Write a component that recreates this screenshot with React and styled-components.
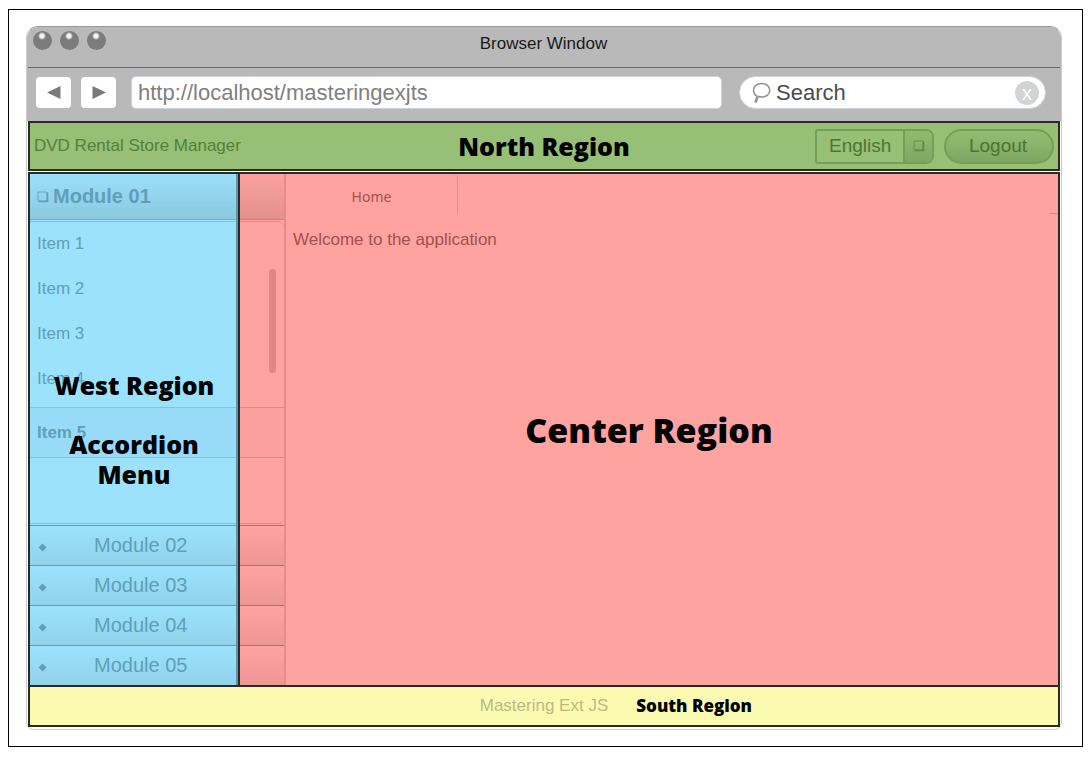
import React from "react";
import styled, { createGlobalStyle, css } from "styled-components";

const sans = '"Liberation Sans", Arial, sans-serif';
const heavy = '"Open Sans", "Noto Sans", sans-serif';
const line = "#2a2a26";

const GlobalStyle = createGlobalStyle`
  *, *::before, *::after { box-sizing: border-box; }
  body { margin: 0; background: #fff; font-family: ${sans}; }
  button, input, select { font-family: inherit; margin: 0; }
  ul, h1, h2, p { margin: 0; padding: 0; }
`;

const Frame = styled.div`
  margin: 9px 7px 11px 8px;
  padding: 16px 20px 16px 17px;
  border: 1px solid #000;
`;

const BrowserWindow = styled.div`
  border: 1px solid #ccc;
  border-top-color: #999;
  border-radius: 12px 12px 8px 8px;
  padding-bottom: 2px;
`;

const Chrome = styled.header`
  background: #b9b9b9;
  border-radius: 11px 11px 0 0;
`;

const TitleBar = styled.div`
  display: grid;
  grid-template-columns: 1fr auto 1fr;
  height: 41px;
  margin: 0 1px;
  padding: 4px 6px 0 5px;
  border-bottom: 1px solid #6a6a6a;
`;

const Lights = styled.div`
  display: flex;
  gap: 8px;
`;

const Light = styled.span`
  width: 19px;
  height: 19px;
  border-radius: 50%;
  background: radial-gradient(circle at 9px 5px, #fff 0, #eee 2px, #7c7c7c 4px);
`;

const WindowTitle = styled.h1`
  font-size: 17px;
  font-weight: 400;
  line-height: 26px;
  color: #1a1a1a;
`;

const Toolbar = styled.div`
  display: flex;
  align-items: center;
  height: 53px;
  padding: 0 15px 4px 9px;
`;

const NavButton = styled.button`
  display: grid;
  place-items: center;
  width: 35px;
  height: 31px;
  margin-right: 10px;
  padding: 0;
  border: 0;
  border-radius: 4px;
  background: #fff;
`;

const AddressInput = styled.input`
  flex: 1;
  min-width: 0;
  height: 33px;
  margin: 0 17px 0 5px;
  padding: 0 6px;
  border: 1px solid #cdd1da;
  border-radius: 5px;
  background: #fff;
  color: #808080;
  font-size: 22px;
`;

const SearchBox = styled.label`
  display: flex;
  align-items: center;
  flex: 0 0 307px;
  min-width: 0;
  height: 33px;
  padding: 0 6px 0 12px;
  border: 1px solid #cdd1da;
  border-radius: 17px;
  background: #fff;
`;

const SearchInput = styled.input`
  flex: 1;
  min-width: 0;
  padding: 0 0 0 5px;
  border: 0;
  background: transparent;
  color: #4c4c4c;
  font-size: 22px;
  &::placeholder { color: #4c4c4c; opacity: 1; }
`;

const ClearButton = styled.button`
  width: 24px;
  height: 24px;
  padding: 0;
  border: 0;
  border-radius: 50%;
  background: #d2d4d4;
  color: #fff;
  font-size: 20px;
  line-height: 24px;
`;

const Regions = styled.div`
  margin: 0 1px;
`;

const RegionLabel = styled.h2`
  font-family: ${heavy};
  font-weight: 800;
  color: #000;
  font-size: ${(p) => p.$size}px;
  line-height: ${(p) => p.$leading || 30}px;
  white-space: nowrap;
`;

const North = styled.section`
  display: grid;
  grid-template-columns: 1fr auto 1fr;
  align-items: center;
  height: 50px;
  margin-bottom: 1px;
  padding: 0 4px;
  border: 2px solid ${line};
  background: #97bf76;
`;

const AppTitle = styled.p`
  font-size: 17px;
  line-height: 20px;
  color: #55803a;
`;

const NorthTools = styled.div`
  display: flex;
  justify-content: flex-end;
  gap: 10px;
`;

const LanguagePicker = styled.label`
  display: flex;
  width: 119px;
  height: 35px;
  border: 2px solid #759f58;
  border-radius: 3px 8px 8px 3px;
  overflow: hidden;
`;

const LanguageSelect = styled.select`
  appearance: none;
  flex: 1;
  min-width: 0;
  padding: 0 0 2px 12px;
  border: 0;
  background: transparent;
  color: #4d7533;
  font-size: 19px;
`;

const PickerHandle = styled.span`
  display: grid;
  place-items: center;
  width: 29px;
  border-left: 2px solid #759f58;
  background: linear-gradient(#92bb71, #7fa662);
`;

const LogoutButton = styled.button`
  width: 110px;
  height: 35px;
  padding: 0 2px 0 0;
  border: 2px solid #759f58;
  border-radius: 18px;
  background: linear-gradient(#94bd73, #7fa662);
  color: #4d7533;
  font-size: 19px;
`;

const Workspace = styled.div`
  position: relative;
  display: flex;
  border: solid ${line};
  border-width: 2px 2px 0;
  background: #ffa3a0;
`;

const westWidth = 210;

const WestRegion = styled.section`
  position: absolute;
  inset: 0 auto 0 0;
  display: flex;
  flex-direction: column;
  justify-content: center;
  gap: 29px;
  width: ${westWidth}px;
  border-right: 2px solid ${line};
  box-shadow: inset -2px 0 #5a94ad;
  text-align: center;
  pointer-events: none;
  ${(p) => p.$fill && css`background: #9ce2fc;`}
`;

const CenterRegion = styled.section`
  position: absolute;
  inset: 0 0 0 ${westWidth}px;
  display: grid;
  place-items: center;
  pointer-events: none;
`;

const Sidebar = styled.nav`
  position: relative;
  width: 256px;
  border-right: 2px solid rgba(80, 0, 0, 0.14);
`;

const ModuleHead = styled.button`
  display: flex;
  align-items: center;
  width: 100%;
  height: 46px;
  padding: 0 0 0 7px;
  border: 0;
  border-bottom: 1px solid rgba(0, 40, 60, 0.25);
  background: linear-gradient(rgba(0, 0, 0, 0.01), rgba(0, 0, 0, 0.11));
  color: #609fba;
  font-size: 20px;
  font-weight: 700;
`;

const BoxIcon = styled.svg`
  margin-right: 4px;
`;

const ItemPanel = styled.ul`
  position: relative;
  height: 303px;
  margin-top: 1px;
  border: 1px solid rgba(0, 40, 60, 0.17);
  border-width: 1px 0;
  border-radius: 0 6px 6px 0;
  list-style: none;
`;

const Item = styled.li`
  height: 45px;
  padding-left: 7px;
  line-height: 43px;
  ${(p) => p.$selected && css`
    height: 51px;
    margin-top: 5px;
    line-height: 49px;
    font-weight: 700;
    border: 1px solid rgba(0, 40, 60, 0.14);
    border-width: 1px 0;
    background: linear-gradient(to right, rgba(60, 60, 180, 0.04) ${westWidth}px, rgba(60, 0, 0, 0.02) 0);
  `}
`;

const ItemLink = styled.a`
  color: #609fba;
  font-size: 17px;
  text-decoration: none;
`;

const ScrollThumb = styled.span`
  position: absolute;
  top: 47px;
  right: 8px;
  width: 7px;
  height: 104px;
  border-radius: 4px;
  background: #e08684;
`;

const ModuleRow = styled.button`
  display: flex;
  align-items: center;
  width: 100%;
  height: 40px;
  padding: 0 0 0 8px;
  border: 0;
  border-top: 1px solid rgba(0, 40, 60, 0.32);
  background: linear-gradient(rgba(0, 0, 0, 0), rgba(0, 0, 0, 0.07));
  color: #609fba;
  font-size: 20px;
`;

const Bullet = styled.svg`
  margin-top: 3px;
`;

const ModuleName = styled.span`
  margin-left: 47px;
`;

const ModuleGroup = styled.div`
  padding-top: 1px;
`;

const Content = styled.main`
  flex: 1;
  color: #a3504e;
`;

const TabStrip = styled.div`
  display: flex;
  justify-content: space-between;
  align-items: flex-end;
  height: 40px;
`;

const Tab = styled.button`
  width: 172px;
  height: 40px;
  padding: 4px 0 0;
  border: 0;
  border-right: 1px solid #df8f8c;
  border-radius: 5px 5px 0 0;
  background: transparent;
  color: #a3504e;
  font-family: "Noto Sans", sans-serif;
  font-size: 14px;
`;

const StripEnd = styled.span`
  width: 8px;
  height: 1px;
  background: #d98683;
`;

const Welcome = styled.p`
  padding: 15px 7px;
  font-size: 17px;
  line-height: 22px;
`;

const South = styled.footer`
  display: grid;
  grid-template-columns: 1fr auto 1fr;
  align-items: center;
  height: 42px;
  border: 2px solid ${line};
  background: #fafab0;
`;

const FooterText = styled.p`
  grid-column: 2;
  margin-right: 28px;
  margin-left: 28px;
  color: #bcbc82;
  font-size: 17px;
  line-height: 20px;
`;

const Box = ({ className }) => (
  <BoxIcon className={className} width="12" height="12" viewBox="0 0 12 12" fill="none" stroke="currentColor" aria-hidden="true">
    <path d="M1 1h9v9H1z" strokeWidth=".8" />
    <path d="M10.500 1.500v9H1.500" strokeWidth="1.600" />
  </BoxIcon>
);

const HandleBox = styled(Box)`
  margin: 0;
  color: #5f8b43;
`;

const items = ["Item 1", "Item 2", "Item 3", "Item 4", "Item 5"];
const modules = ["Module 02", "Module 03", "Module 04", "Module 05"];

export default function App() {
  return (
    <>
      <GlobalStyle />
      <Frame>
        <BrowserWindow>
          <Chrome>
            <TitleBar>
              <Lights><Light /><Light /><Light /></Lights>
              <WindowTitle>Browser Window</WindowTitle>
            </TitleBar>
            <Toolbar>
              <NavButton aria-label="Back">
                <svg width="14" height="13" viewBox="0 0 14 13"><path d="M13.500 0v13L0 6.500z" fill="#7a7a7a" /></svg>
              </NavButton>
              <NavButton aria-label="Forward">
                <svg width="14" height="13" viewBox="0 0 14 13"><path d="M.5 0v13L14 6.500z" fill="#7a7a7a" /></svg>
              </NavButton>
              <AddressInput aria-label="Address" defaultValue="http://localhost/masteringexjts" />
              <SearchBox>
                <svg width="19" height="22" viewBox="0 0 19 22" fill="none" stroke="#929292" aria-hidden="true">
                  <path d="M5.200 14.200C2.800 13 1.500 10.800 1.500 8.300 1.500 4.400 5 1.500 9.600 1.500s8.200 2.900 8.200 6.800-3.500 6.700-8.200 6.700c-1.400 0-2.600-.3-3.600-.8" strokeWidth="1.600" />
                  <path d="M5.600 14.300 3.500 20.500" strokeWidth="2.600" />
                </svg>
                <SearchInput aria-label="Search" placeholder="Search" />
                <ClearButton aria-label="Clear search">x</ClearButton>
              </SearchBox>
            </Toolbar>
          </Chrome>
          <Regions>
            <North>
              <AppTitle>DVD Rental Store Manager</AppTitle>
              <RegionLabel $size={25}>North Region</RegionLabel>
              <NorthTools>
                <LanguagePicker>
                  <LanguageSelect aria-label="Language" defaultValue="English">
                    <option>English</option>
                  </LanguageSelect>
                  <PickerHandle><HandleBox /></PickerHandle>
                </LanguagePicker>
                <LogoutButton>Logout</LogoutButton>
              </NorthTools>
            </North>
            <Workspace>
              <WestRegion $fill aria-hidden="true" />
              <Sidebar>
                <ModuleHead><Box />Module 01</ModuleHead>
                <ItemPanel>
                  {items.map((name, i) => (
                    <Item key={name} $selected={i === 4}><ItemLink href="#">{name}</ItemLink></Item>
                  ))}
                  <ScrollThumb />
                </ItemPanel>
                <ModuleGroup>
                  {modules.map((name) => (
                    <ModuleRow key={name}>
                      <Bullet width="9" height="9" viewBox="0 0 9 9" aria-hidden="true"><path d="M4.500.5 8.500 4.500 4.500 8.500.5 4.500z" fill="currentColor" /></Bullet>
                      <ModuleName>{name}</ModuleName>
                    </ModuleRow>
                  ))}
                </ModuleGroup>
              </Sidebar>
              <Content>
                <TabStrip><Tab>Home</Tab><StripEnd /></TabStrip>
                <Welcome>Welcome to the application</Welcome>
              </Content>
              <WestRegion>
                <RegionLabel $size={25}>West Region</RegionLabel>
                <RegionLabel $size={25}>Accordion<br />Menu</RegionLabel>
              </WestRegion>
              <CenterRegion>
                <RegionLabel $size={34} $leading={40}>Center Region</RegionLabel>
              </CenterRegion>
            </Workspace>
            <South>
              <FooterText>Mastering Ext JS</FooterText>
              <RegionLabel $size={17}>South Region</RegionLabel>
            </South>
          </Regions>
        </BrowserWindow>
      </Frame>
    </>
  );
}
